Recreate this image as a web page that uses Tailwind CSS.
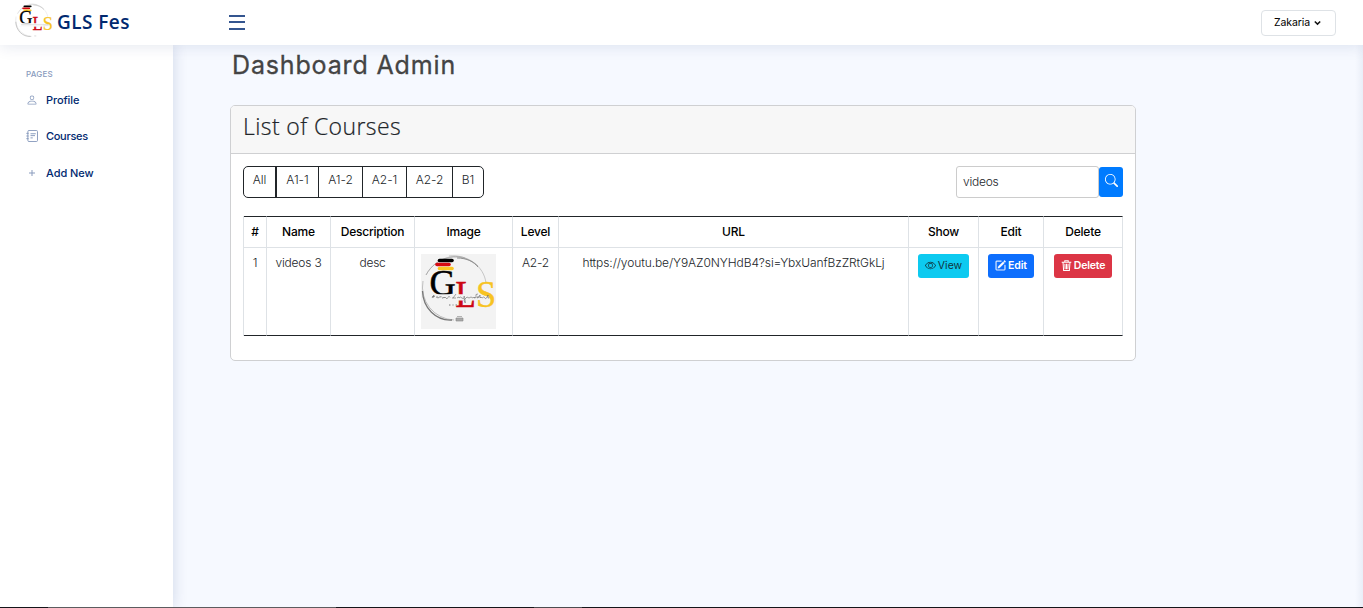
<!DOCTYPE html>
<html lang="en">
<head>
<meta charset="utf-8">
<title>GLS Fes - Dashboard Admin</title>
<script src="https://cdn.jsdelivr.net/npm/@tailwindcss/browser@4"></script>
</head>
<body class="h-[608px] overflow-hidden bg-[#f6f9ff] font-['Inter',sans-serif] text-[12px] text-[#212529]">
<svg class="hidden">
  <symbol id="ring" viewBox="0 0 75 75">
    <g fill="none">
      <path d="M57 12A33 33 0 0 0 5 21M2 27A33 33 0 0 0 33 66" stroke-width=".5" stroke="#888"/>
      <path d="M1.500 37C2 54 15 67 31 66" stroke-width="1.300" stroke="#777"/>
      <path d="M5 21C15 3 33 0 44 4M28 2C46 0 63 12 65 29" stroke-width=".5" stroke="#999"/>
      <path d="M36 4C46 4 53 8 57 13" stroke-width=".9" stroke="#888"/>
    </g>
  </symbol>
  <symbol id="letters" viewBox="0 0 75 75">
    <g stroke-width="3.600" stroke-linecap="round">
      <path d="M18.500 6.500H31" stroke="#000"/><path d="M16 10.500H28" stroke="#d50a12"/><path d="M18.500 14.500H31" stroke="#f9c623"/>
    </g>
    <g font-family="'Liberation Serif',serif">
      <text x="8.500" y="40.500" font-size="36" textLength="26" lengthAdjust="spacingAndGlyphs" fill="#000" stroke="#000" stroke-width=".5">G</text>
      <text x="34.500" y="53" font-size="38" textLength="20" lengthAdjust="spacingAndGlyphs" fill="#cc0713" stroke="#cc0713" stroke-width=".7">L</text>
      <text x="55" y="53" font-size="37" textLength="20" lengthAdjust="spacingAndGlyphs" fill="#f7c322" stroke="#f7c322" stroke-width=".4">S</text>
    </g>
    <path d="M8 40.300H56V46.500H8ZM56 42.500H68V46H56Z" fill="#f3f3f3"/>
  </symbol>
  <symbol id="tagline" viewBox="0 0 75 75">
    <path d="M11 44l2-3-1 3m-1-1.500h3m1 1q2-2 1 0 1 .8 2 0l1-1v1q1-2 2 0t2-.5v1q1-2 2 0t2-.5 2 0M32 44l3-4m-4 4h4m1 0q2-2 2 0 1-2 3 0t2-1 1 3-1 0l3-3 2 1 2-1 2 1q1-2 2 0M57 40q-3 0-2 2t-2 2m5-1q-2-1-2 1 2 0 3-3v3q1-2 2 0 2-2 3 0t3-3v3h1" fill="none" stroke="#666" stroke-width=".6"/>
    <path d="M28 51h1.500m2 0h1m2 0h1.500" stroke="#777" stroke-width="1"/>
    <path d="M35 64h7v3h-7zM36 62.500h5" fill="#aaa" stroke="#888" stroke-width=".6"/>
  </symbol>
</svg>

<header class="relative z-20 flex h-[45px] items-center bg-white shadow-[0_2px_14px_rgba(1,41,112,0.1)]">
  <div class="flex w-[229px] items-center pl-[15px]">
    <svg class="-mt-[2px] h-[38px] w-[38px]" viewBox="0 0 75 75"><use href="#ring" opacity=".6"/><use href="#letters"/><path d="M8 40.300H56V46H8Z" fill="#fff"/><path d="M12 43h54M38 65h4" stroke="#aaa" stroke-width=".8"/></svg>
    <span class="-mt-[1px] ml-[4px] font-['Open_Sans',sans-serif] text-[19px] font-semibold leading-[24px] tracking-[0.450px] text-[#012970]">GLS Fes</span>
  </div>
  <svg class="-mt-[2px] h-[16px] w-[16px]" viewBox="0 0 16 16"><path d="M0 2h16M0 8h16M0 15h16" stroke="#34558f" stroke-width="2"/></svg>
  <button class="ml-auto mr-[27px] flex h-[26px] w-[75px] items-center rounded-[4px] border border-[#dee2e6] pl-[12px] text-[10.500px] tracking-[-0.1px] text-black">Zakaria
    <svg class="ml-[4px] h-[6px] w-[7px]" viewBox="0 0 7 6"><path d="M.8 1.500l2.700 2.600 2.700-2.600" fill="none" stroke="#111" stroke-width="1.500"/></svg>
  </button>
</header>

<div class="flex h-[563px]">
  <aside class="relative z-10 w-[173px] bg-white pl-[26px] pt-[23px] font-medium text-[#012970] shadow-[0_0_14px_rgba(1,41,112,0.16)]">
    <h2 class="h-[12px] text-[8px] leading-[12px] tracking-[0.2px] text-[#899bbd]">PAGES</h2>
    <nav class="text-[11px]">
      <a class="mt-[12px] flex h-[16px] items-center gap-[8px] tracking-[-0.1px]"><svg class="h-[12px] w-[12px]" viewBox="0 0 16 16" fill="#899bbd"><path d="M8 8a3 3 0 1 0 0-6 3 3 0 0 0 0 6m2-3a2 2 0 1 1-4 0 2 2 0 0 1 4 0m4 8c0 1-1 1-1 1H3s-1 0-1-1 1-4 6-4 6 3 6 4m-1-.004c-.001-.246-.154-.986-.832-1.664C11.516 10.680 10.289 10 8 10s-3.516.68-4.168 1.332c-.678.678-.83 1.418-.832 1.664z"/></svg>Profile</a>
      <a class="mt-[20px] flex h-[16px] items-center gap-[8px] tracking-[-0.3px]"><svg class="h-[12px] w-[12px]" viewBox="0 0 16 16" fill="none" stroke="#899bbd" stroke-width="1.300"><rect x="2.500" y=".6" width="12.800" height="14.800" rx="1.500"/><path d="M.5 4.500h3M.5 8h3M.5 11.500h3M6 5h7M6 7.500h6M6 10.500h3"/></svg>Courses</a>
      <a class="mt-[21px] flex h-[16px] items-center gap-[8px] tracking-[-0.050px]"><svg class="h-[12px] w-[12px]" viewBox="0 0 12 12"><path d="M6 3v6M3 6h6" stroke="#899bbd"/></svg>Add New</a>
    </nav>
  </aside>

  <main class="ml-[57px] w-[906px]">
    <h1 class="h-[60px] pl-[2px] pt-[4px] text-[25px] font-normal leading-[32px] tracking-[0.850px] text-[#444] [-webkit-text-stroke:0.3px_#444]">Dashboard Admin</h1>
    <section class="h-[256px] rounded-[5px] border border-[#cfd0d2] bg-white">
      <h2 class="h-[48px] rounded-t-[4px] border-b border-[#cfd0d2] bg-[#f7f7f7] pl-[12px] pt-[4px] font-['Open_Sans',sans-serif] text-[23px] font-light leading-[32px] tracking-[0.4px] [-webkit-text-stroke:0.2px_#212529]">List of Courses</h2>
      <div class="flex items-center justify-between px-[12px] pt-[12px]">
        <div class="flex h-[32px] overflow-hidden rounded-[5px] border border-[#212529] text-center text-[12px] font-[350] leading-[26px] tracking-[-0.050px]">
          <span class="w-[33px] border-r-2 border-[#212529]">All</span><span class="w-[42px] border-r border-[#212529]">A1-1</span><span class="w-[44px] border-r border-[#212529]">A1-2</span><span class="w-[44px] border-r border-[#212529]">A2-1</span><span class="w-[46px] border-r border-[#212529]">A2-2</span><span class="w-[30px]">B1</span>
        </div>
        <form class="flex items-center">
          <div class="flex h-[32px] w-[143px] items-center rounded-[3px] border border-[#ccc] pl-[6px] font-[350] tracking-[-0.250px]">videos</div>
          <div class="flex h-[30px] w-[24px] items-center justify-center rounded-[3px] bg-[#007bff]"><svg class="mb-[3px] h-[13px] w-[13px]" viewBox="0 0 16 16" fill="#fff"><path d="M11.742 10.344a6.500 6.500 0 1 0-1.397 1.398h-.001q.044.06.098.115l3.850 3.850a1 1 0 0 0 1.415-1.414l-3.850-3.850a1 1 0 0 0-.115-.1zM12 6.500a5.500 5.500 0 1 1-11 0 5.500 5.500 0 0 1 11 0"/></svg></div>
        </form>
      </div>
      <div class="mx-[12px] mt-[18px] grid w-[880px] grid-cols-[23px_64px_84px_98px_46px_350px_70px_65px_79px] border-l border-[#dee2e6] text-center font-[350] leading-[30px] tracking-[-0.210px] *:border-r *:border-[#dee2e6]">
        <div class="h-[32px] border-y border-t-[#212529]! font-medium text-black">#</div>
        <div class="h-[32px] border-y border-t-[#212529]! font-medium text-black">Name</div>
        <div class="h-[32px] border-y border-t-[#212529]! font-medium text-black">Description</div>
        <div class="h-[32px] border-y border-t-[#212529]! font-medium text-black">Image</div>
        <div class="h-[32px] border-y border-t-[#212529]! font-medium text-black">Level</div>
        <div class="h-[32px] border-y border-t-[#212529]! font-medium text-black">URL</div>
        <div class="h-[32px] border-y border-t-[#212529]! font-medium text-black">Show</div>
        <div class="h-[32px] border-y border-t-[#212529]! font-medium text-black">Edit</div>
        <div class="h-[32px] border-y border-t-[#212529]! font-medium text-black">Delete</div>
        <div class="h-[88px] border-b border-b-[#212529]!">1</div>
        <div class="h-[88px] border-b border-b-[#212529]!">videos 3</div>
        <div class="h-[88px] border-b border-b-[#212529]!">desc</div>
        <div class="h-[88px] border-b border-b-[#212529]! pl-[6px] pt-[6px]"><svg class="h-[75px] w-[75px] bg-[#f3f3f3]" viewBox="0 0 75 75"><use href="#ring"/><use href="#letters"/><use href="#tagline"/></svg></div>
        <div class="h-[88px] border-b border-b-[#212529]!">A2-2</div>
        <div class="h-[88px] border-b border-b-[#212529]! tracking-[-0.085px]">https://youtu.be/Y9AZ0NYHdB4?si=YbxUanfBzZRtGkLj</div>
        <div class="h-[88px] border-b border-b-[#212529]! pl-[9px] pt-[6px]">
          <div class="flex h-[24px] w-[51px] items-center justify-center gap-[2px] rounded-[3px] bg-[#0dcaf0] text-[10.500px] font-normal tracking-normal text-[#11333c]"><svg class="mb-[2px] h-[11px] w-[11px]" viewBox="0 0 16 16" fill="currentColor"><path d="M16 8s-3-5.500-8-5.500S0 8 0 8s3 5.500 8 5.500S16 8 16 8M1.173 8a13 13 0 0 1 1.660-2.043C4.120 4.668 5.880 3.500 8 3.500s3.879 1.168 5.168 2.457A13 13 0 0 1 14.828 8q-.086.13-.195.288c-.335.48-.83 1.120-1.465 1.755C11.879 11.332 10.119 12.500 8 12.500s-3.879-1.168-5.168-2.457A13 13 0 0 1 1.172 8z"/><path d="M8 5.500a2.500 2.500 0 1 0 0 5 2.500 2.500 0 0 0 0-5M4.500 8a3.500 3.500 0 1 1 7 0 3.500 3.500 0 0 1-7 0"/></svg>View</div>
        </div>
        <div class="h-[88px] border-b border-b-[#212529]! pl-[9px] pt-[6px]">
          <div class="flex h-[24px] w-[46px] items-center justify-center gap-[2px] rounded-[3px] bg-[#0d6efd] text-[10.500px] font-semibold tracking-[-0.1px] text-white"><svg class="mb-[2px] h-[11px] w-[11px]" viewBox="0 0 16 16" fill="currentColor" stroke="currentColor" stroke-width=".4"><path d="M15.502 1.940a.5.5 0 0 1 0 .706L14.459 3.690l-2-2L13.502.646a.5.5 0 0 1 .707 0l1.293 1.293zm-1.750 2.456-2-2L4.939 9.210a.5.5 0 0 0-.121.196l-.805 2.414a.25.25 0 0 0 .316.316l2.414-.805a.5.5 0 0 0 .196-.12z"/><path d="M1 13.500A1.500 1.500 0 0 0 2.500 15h11a1.500 1.500 0 0 0 1.500-1.500v-6a.5.5 0 0 0-1 0v6a.5.5 0 0 1-.5.5h-11a.5.5 0 0 1-.5-.5v-11a.5.5 0 0 1 .5-.5H9a.5.5 0 0 0 0-1H2.500A1.500 1.500 0 0 0 1 2.500z"/></svg>Edit</div>
        </div>
        <div class="h-[88px] border-b border-b-[#212529]! pl-[10px] pt-[6px]">
          <div class="flex h-[24px] w-[58px] items-center justify-center gap-[2px] rounded-[3px] bg-[#dc3545] text-[10.500px] font-semibold tracking-[-0.2px] text-white"><svg class="mb-[2px] h-[11px] w-[11px]" viewBox="0 0 16 16" fill="none" stroke="currentColor" stroke-width="1.500"><path d="M1 3.200h14M5.500 3V1h5v2M3 4l.8 11.300h8.400L13 4M5.700 5.500l.3 8M8 5.500v8M10.300 5.500l-.3 8"/></svg>Delete</div>
        </div>
      </div>
    </section>
  </main>
  <div class="ml-auto w-[8px] bg-linear-to-r from-transparent to-[#012970]/5"></div>
</div>
<div class="absolute inset-x-0 top-[607px] z-30 flex h-px bg-[#15151a]"><i class="ml-[48px] w-[288px] bg-[#5c5c5f]"></i><i class="ml-[198px] w-[48px] bg-[#4c4c50]"></i></div>
</body>
</html>
